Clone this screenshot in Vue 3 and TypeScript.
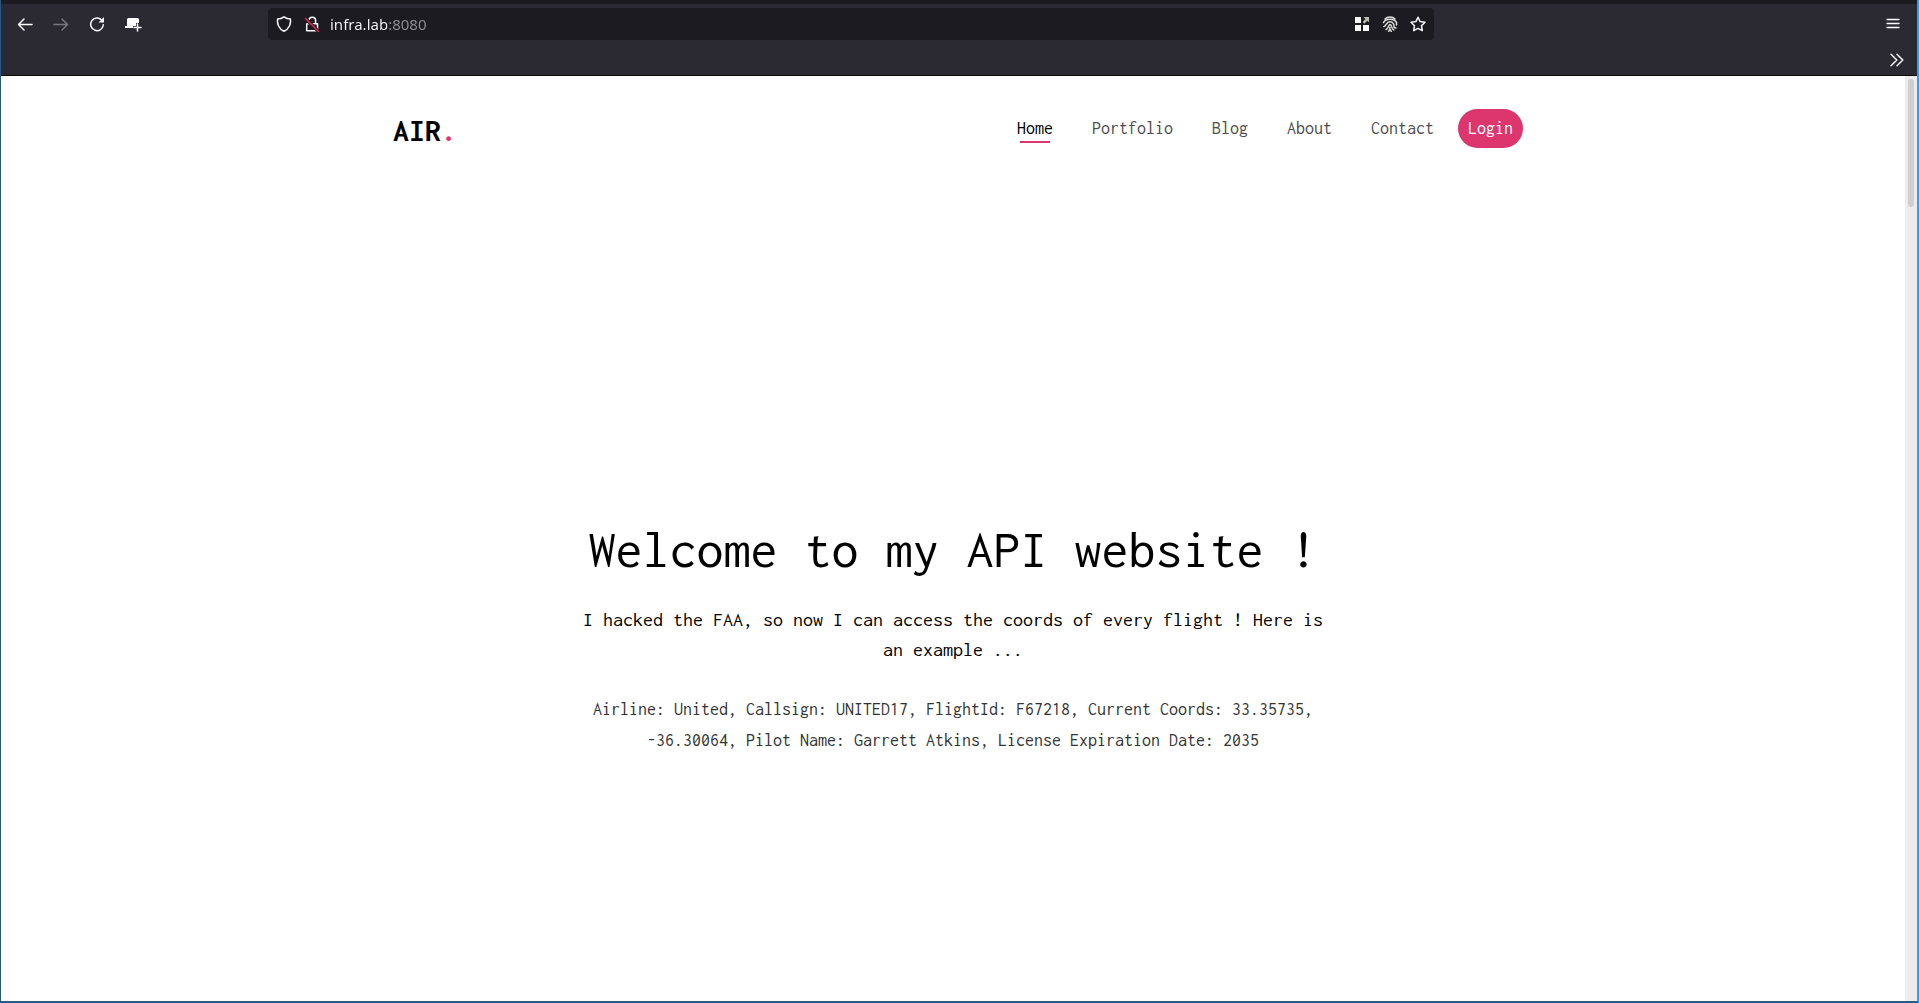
<script setup lang="ts">
import { ref } from 'vue'

interface NavItem {
  label: string
  active?: boolean
}

const address = ref('infra.lab:8080')

const navItems: NavItem[] = [
  { label: 'Home', active: true },
  { label: 'Portfolio' },
  { label: 'Blog' },
  { label: 'About' },
  { label: 'Contact' },
]
</script>

<template>
  <div class="window">
    <header class="chrome">
      <div class="tab-edge"></div>
      <div class="toolbar">
        <div class="tools">
          <button class="tool" type="button" aria-label="Back">
            <svg width="16" height="16" viewBox="0 0 16 16"><path d="M15 8.500H2M7 3 1.500 8.500 7 14" /></svg>
          </button>
          <button class="tool dim" type="button" aria-label="Forward">
            <svg width="16" height="16" viewBox="0 0 16 16"><path d="M1 8.500h13M9 3l5.500 5.500L9 14" /></svg>
          </button>
          <button class="tool" type="button" aria-label="Reload">
            <svg width="16" height="16" viewBox="0 0 16 16">
              <path d="M12.600 4A6.300 6.300 0 1 0 14.300 8.800" />
              <path class="solid" d="M15 1v5.500H9.500z" />
            </svg>
          </button>
          <button class="tool" type="button" aria-label="New container">
            <svg width="18" height="16" viewBox="0 0 18 16">
              <path class="solid" d="M3 3.500Q3 2 4.500 2h9Q15 2 15 3.500V7h-3v3H9v2H1v-2h2z" />
              <path d="M13.500 8v7M10 11.500h7" />
            </svg>
          </button>
        </div>
        <div class="urlbar">
          <svg class="icon" width="16" height="16" viewBox="0 0 16 16" aria-hidden="true">
            <path d="M8 .8C6.400 2 4 3 1.600 3.100.9 7.500 2.800 13 8 15.200c5.200-2.200 7.100-7.700 6.400-12.100C12 3 9.600 2 8 .8z" />
          </svg>
          <svg class="icon lock" width="16" height="16" viewBox="0 0 16 16" aria-hidden="true">
            <path d="M5 7V4.500a3.300 3.300 0 0 1 6.600 0V7M3 7.700h10.500v7H2.700V8" />
            <path class="strike-gap" d="M1.500 2.500 14.500 15.500" />
            <path class="strike" d="M1.500 2.500 14.500 15.500" />
          </svg>
          <input v-model="address" class="address" type="text" aria-label="Address" spellcheck="false" />
          <button class="tool small" type="button" aria-label="Apps">
            <svg width="16" height="16" viewBox="0 0 16 16">
              <path class="solid" d="M1 1h6v6H1zM1 9h6v6H1zM9 9h6v6H9z" />
              <path class="solid pale" d="M9.500 1H15v5.500l-1.700-1.700-3 2.900-1.600-1.600 2.800-3z" />
            </svg>
          </button>
          <button class="tool small" type="button" aria-label="Fingerprint">
            <svg class="print" width="16" height="16" viewBox="0 0 16 16">
              <path d="M3 3C5.500.3 10.500.3 13 3M1.500 6.500C4 2.300 12 2.300 14.500 6.500V9M2 10.500C4.500 10 4 5.800 8 5.800c3 0 4.200 2.500 4 4.700 0 1 .8 1.500 2 1.500M4 13.500c2.700-.8 2.500-5 4-5 1.800 0 1 3.500 3.700 5.500M8 11.500c0 1.500-.5 2.800-1.300 3.800M8.300 13.500l1 2" />
            </svg>
          </button>
          <button class="tool small" type="button" aria-label="Bookmark">
            <svg width="16" height="16" viewBox="0 0 16 16">
              <path d="M8 1.200 10.100 5.600l4.900.7-3.500 3.400.8 4.900L8 12.300l-4.300 2.300.8-4.900L1 6.300l4.900-.7z" />
            </svg>
          </button>
        </div>
        <button class="tool menu" type="button" aria-label="Menu">
          <svg width="16" height="16" viewBox="0 0 16 16"><path class="bars" d="M2 3.500h12M2 7.500h12M2 11.500h12" /></svg>
        </button>
      </div>
      <div class="bookmarks">
        <button class="tool" type="button" aria-label="More bookmarks">
          <svg width="16" height="16" viewBox="0 0 16 16"><path d="M2 2.200 7.800 8 2 13.800M8 2.200 13.800 8 8 13.800" /></svg>
        </button>
      </div>
    </header>

    <div class="viewport">
      <div class="page">
        <div class="site-head">
          <a class="brand" href="#">AIR<span>.</span></a>
          <nav class="nav">
            <a v-for="item in navItems" :key="item.label" href="#" :class="{ active: item.active }">{{ item.label }}</a>
            <a class="login" href="#">Login</a>
          </nav>
        </div>
        <main class="hero">
          <h1>Welcome to my API website !</h1>
          <p class="lead">I hacked the FAA, so now I can access the coords of every flight ! Here is an example ...</p>
          <p class="flight">Airline: United, Callsign: UNITED17, FlightId: F67218, Current Coords: 33.35735, -36.30064, Pilot Name: Garrett Atkins, License Expiration Date: 2035</p>
        </main>
      </div>
      <div class="scrollbar"><div class="thumb"></div></div>
    </div>
  </div>
</template>

<style>
body {
  margin: 0;
}
</style>

<style scoped>
* {
  box-sizing: border-box;
}
.window {
  display: flex;
  flex-direction: column;
  min-height: 100vh;
  border-style: solid;
  border-width: 0 2px 2px 1px;
  border-color: #2a5a82 #2f9ff5 #2a5a82 #235a85;
  background: #fff;
}
.chrome {
  background: #2b2a33;
  border-bottom: 1px solid #0c0c0d;
}
.tab-edge {
  height: 4px;
  background: #1c1b22;
}
.toolbar {
  display: flex;
  align-items: center;
  height: 40px;
  padding: 0 15px;
}
.tools {
  display: flex;
  gap: 18px;
  width: 252px;
}
.tool {
  display: flex;
  align-items: center;
  justify-content: center;
  width: 18px;
  height: 18px;
  padding: 0;
  border: 0;
  background: none;
  color: #fbfbfe;
}
.dim {
  color: #77767d;
}
svg {
  display: block;
  flex: none;
  fill: none;
  stroke: currentColor;
  stroke-width: 1.5;
  stroke-linecap: round;
  stroke-linejoin: round;
}
.solid {
  fill: currentColor;
  stroke: none;
}
.pale {
  fill: #bdbdb8;
}
.bars {
  stroke-width: 1.3;
}
.print {
  color: #dddddb;
}
.icon {
  color: #fbfbfe;
}
.lock {
  margin-left: 12px;
}
.strike-gap {
  stroke: #1c1b22;
  stroke-width: 3.5;
}
.strike {
  stroke: #e22850;
}
.urlbar {
  display: flex;
  align-items: center;
  flex: 0 1 1166px;
  height: 32px;
  padding: 0 7px 0 8px;
  border-radius: 4px;
  background: #1c1b22;
}
.address {
  flex: 1;
  min-width: 0;
  margin-left: 10px;
  padding: 0;
  border: 0;
  outline: 0;
  font: 15px/24px "Noto Sans", sans-serif;
  color: transparent;
  background: linear-gradient(to right, #fbfbfe 57px, #8f8f96 57px);
  background-clip: text;
  -webkit-background-clip: text;
}
.small {
  margin-left: 10px;
}
.menu {
  margin-left: auto;
}
.bookmarks {
  display: flex;
  justify-content: flex-end;
  height: 31px;
  padding: 7px 11px 0 0;
}
.viewport {
  display: flex;
  flex: 1;
}
.page {
  flex: 1;
  min-width: 0;
  font-family: Inconsolata, "Noto Sans Mono CJK SC", "Liberation Mono", monospace;
}
.site-head {
  display: flex;
  justify-content: space-between;
  align-items: center;
  max-width: 1140px;
  margin: 0 auto;
  padding-top: 31px;
}
a {
  text-decoration: none;
}
.brand {
  margin: 6px 0 0 10px;
  font-size: 32px;
  line-height: 36px;
  font-weight: 700;
  color: #000;
}
.brand span {
  color: #dd356e;
}
.nav {
  display: flex;
  align-items: center;
  gap: 39px;
  font-size: 18px;
  line-height: 27px;
}
.nav a {
  position: relative;
  color: #4d4d4d;
}
.nav .active {
  color: #000;
}
.nav .active::after {
  content: "";
  position: absolute;
  left: 3px;
  right: 3px;
  bottom: -1px;
  height: 2px;
  background: #dd356e;
}
.nav .login {
  margin-left: -15px;
  padding: 6px 10px;
  border-radius: 20px;
  background: #dd356e;
  color: #fff;
}
.hero {
  max-width: 760px;
  margin: 0 auto;
  padding-top: 368px;
  text-align: center;
}
h1 {
  margin: 0 0 24px;
  font-size: 54px;
  line-height: 64px;
  font-weight: 400;
  color: #000;
}
.lead {
  margin: 0 0 29px;
  font-size: 20px;
  line-height: 30px;
  color: #000;
}
.flight {
  margin: 0;
  font-size: 18px;
  line-height: 31px;
  color: #333;
}
.scrollbar {
  width: 12px;
  padding: 3px;
  background: #edeceb;
}
.thumb {
  height: 128px;
  border-radius: 3px;
  background: #cfcfcf;
}
</style>
